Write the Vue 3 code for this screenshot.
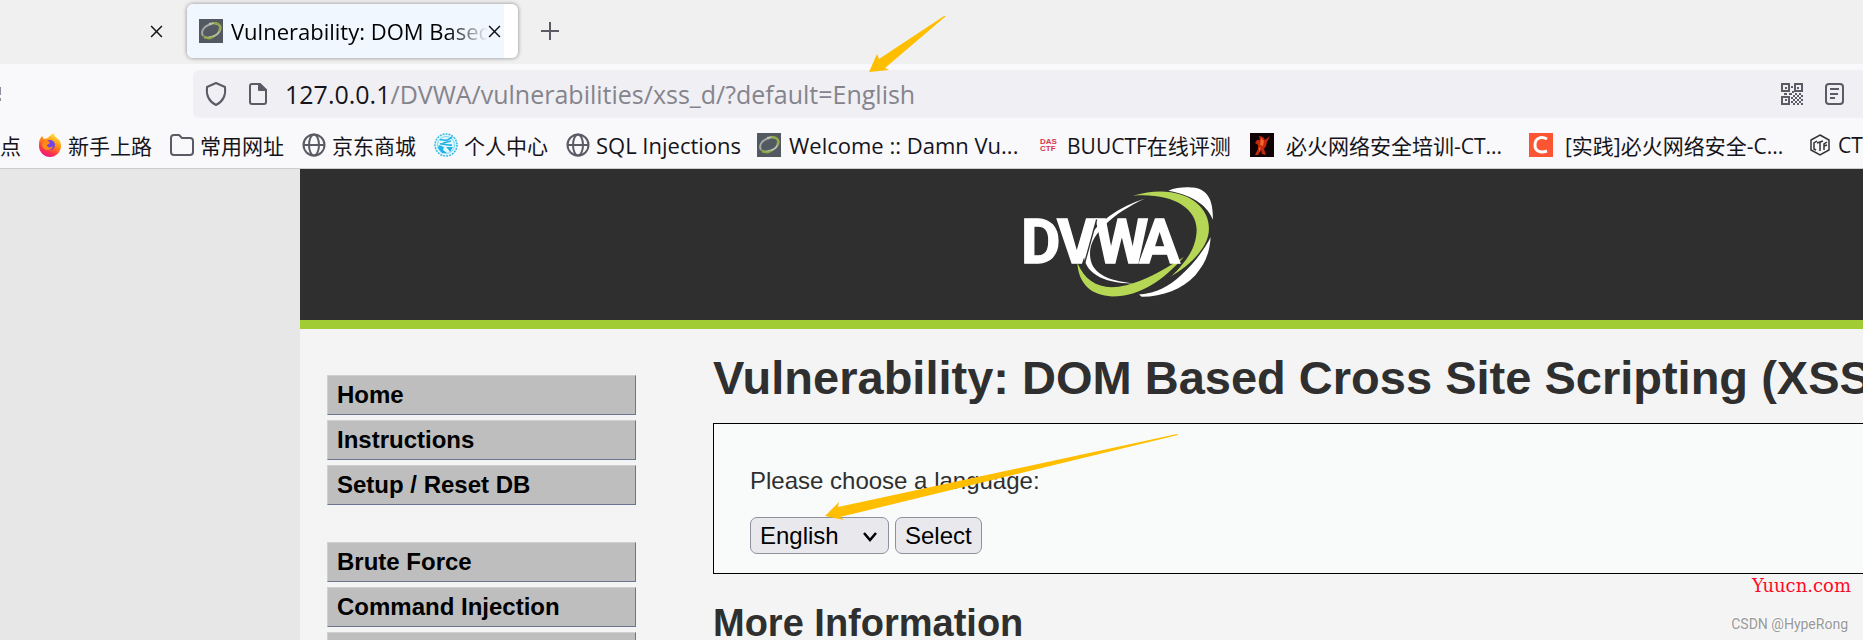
<script setup>
import { ref } from 'vue'

const language = ref('English')
const languages = ['English', 'French', 'Spanish', 'German']
const menu = [
  ['Home', 'Instructions', 'Setup / Reset DB'],
  ['Brute Force', 'Command Injection', 'CSRF'],
]
const bookmarks = [
  { icon: 'fox', label: '新手上路' },
  { icon: 'folder', label: '常用网址' },
  { icon: 'globe', label: '京东商城' },
  { icon: 'badge', label: '个人中心' },
  { icon: 'globe', label: 'SQL Injections', latin: true },
  { icon: 'dvwa', label: 'Welcome :: Damn Vu...', latin: true },
  { icon: 'das', label: 'BUUCTF在线评测' },
  { icon: 'fire', label: '必火网络安全培训-CT...' },
  { icon: 'c', label: '[实践]必火网络安全-C...' },
  { icon: 'hex', label: 'CT' },
]
</script>

<template>
  <div class="screen">
    <header class="browser">
      <div class="tabs">
        <button class="close" aria-label="Close previous tab">
          <svg width="13" height="13" viewBox="0 0 12 12"><path d="M1 1l10 10M11 1L1 11" /></svg>
        </button>
        <div class="tab">
          <div class="tab-fill">
            <svg class="favicon" width="24" height="24" viewBox="0 0 24 24">
              <rect width="24" height="24" fill="#535960" />
              <path d="M4 17C1 12 6 6 13 5" fill="none" stroke="#a5aaa5" stroke-width="2" />
              <path d="M10 5c8-2 13 1 11 6-2 6-11 9-16 7" fill="none" stroke="#b8c2a4" stroke-width="2" />
              <path d="M15 4c6 0 7 4 5 8M5 17c2 3 6 3 9 1" fill="none" stroke="#8fa83f" stroke-width="2" />
            </svg>
            <span class="tab-title">Vulnerability: DOM Based</span>
            <button class="close" aria-label="Close tab">
              <svg width="13" height="13" viewBox="0 0 12 12"><path d="M1 1l10 10M11 1L1 11" /></svg>
            </button>
          </div>
        </div>
        <button class="new-tab" aria-label="New tab">
          <svg width="18" height="18" viewBox="0 0 18 18"><path d="M9 0v18M0 9h18" /></svg>
        </button>
      </div>

      <div class="toolbar">
        <svg class="edge-icon" width="2" height="14" viewBox="0 0 2 14"><path d="M0 0h1v8H0zM0 11h1v3H0z" /></svg>
        <div class="address">
          <svg class="line-icon shield" width="24" height="26" viewBox="0 0 24 26"><path d="M12 2l9 4c1 8-1 14-9 18C4 20 2 14 3 6z" /></svg>
          <svg class="line-icon" width="20" height="24" viewBox="0 0 20 24"><path d="M4 2h8l6 6v12a2 2 0 0 1-2 2H4a2 2 0 0 1-2-2V4a2 2 0 0 1 2-2z" /><path d="M11 2v6h7z" fill="#5b5b66" /></svg>
          <span class="url"><b>127.0.0.1</b>/DVWA/vulnerabilities/xss_d/?default=English</span>
          <svg class="qr" width="22" height="22" viewBox="0 0 22 22" fill="#5b5b66">
            <path fill-rule="evenodd" d="M0 0h9v9H0zM2 2v5h5V2zM13 0h9v9h-9zM15 2v5h5V2zM0 13h9v9H0zM2 15v5h5v-5z" />
            <path d="M4 4h2v2H4zM16 4h2v2h-2zM4 16h2v2H4zM10 3h2v2h-2zM3 10h3v2H3zM8 10h3v2H8zM11 8h2v2h-2zM14 10h2v2h-2zM18 10h2v2h-2zM12 12h2v2h-2zM16 12h2v2h-2zM20 12h2v2h-2zM10 14h2v2h-2zM14 14h2v2h-2zM18 14h2v2h-2zM12 16h2v2h-2zM16 16h2v2h-2zM20 16h2v2h-2zM10 18h2v2h-2zM14 18h2v2h-2zM18 18h2v2h-2zM12 20h2v2h-2zM16 20h2v2h-2zM20 20h2v2h-2z" />
          </svg>
          <svg class="line-icon" width="20" height="22" viewBox="0 0 20 22"><rect x="1" y="1" width="17" height="20" rx="3" /><path d="M5 6h9M5 11h8M5 15h5" /></svg>
        </div>
      </div>

      <nav class="bookmarks" aria-label="Bookmarks">
        <a href="#" class="cut">点</a>
        <a v-for="b in bookmarks" :key="b.label" href="#" :class="[b.icon, { latin: b.latin }]">
          <svg width="24" height="24" viewBox="0 0 24 24">
            <template v-if="b.icon === 'fox'">
              <defs>
                <linearGradient id="fox" x1="0.8" y1="0" x2="0.3" y2="1">
                  <stop offset="0" stop-color="#fff44f" /><stop offset="0.4" stop-color="#ff980e" /><stop offset="0.75" stop-color="#ff3647" /><stop offset="1" stop-color="#e31587" />
                </linearGradient>
              </defs>
              <path d="M2 6l2-3 2 3 4-1c1-2 4-4 6-5 0 3 2 4 4 6 2 1 3 4 3 7 0 6-5 11-11 11S1 19 1 13c0-3 0-5 1-7z" fill="url(#fox)" />
              <circle cx="12" cy="12" r="5" fill="#7542e5" />
              <path d="M6 8c3-1 5 0 6 2l-3 2c0 3 4 3 6 1-1 5-10 6-11-1z" fill="#ff8a16" />
            </template>
            <path v-else-if="b.icon === 'folder'" class="stroke" d="M4 2h5l3 3h8a3 3 0 0 1 3 3v11a3 3 0 0 1-3 3H4a3 3 0 0 1-3-3V5a3 3 0 0 1 3-3z" />
            <g v-else-if="b.icon === 'globe'" class="stroke"><circle cx="12" cy="12" r="10.5" /><ellipse cx="12" cy="12" rx="5" ry="10.5" /><path d="M2 12h20" /></g>
            <g v-else-if="b.icon === 'badge'">
              <circle cx="12" cy="12" r="11" fill="#e4f7fd" stroke="#35b9e7" stroke-width="1.5" stroke-dasharray="2 1" />
              <circle cx="12" cy="12" r="8.5" fill="none" stroke="#7ed3f0" />
              <path d="M6 7c3-1 6 2 9-1l3-2M9 10l8-2M6 11c4-1 7 2 12 1" fill="none" stroke="#1fb3e6" stroke-width="1.6" />
              <path d="M5 12l5 2-1 3 4 3-5 0-4-5zM12 14l7 0-3 5-2-3z" fill="#1fb3e6" />
            </g>
            <g v-else-if="b.icon === 'dvwa'">
              <rect width="24" height="24" fill="#535960" />
              <path d="M4 17C1 12 6 6 13 5" fill="none" stroke="#a5aaa5" stroke-width="2" />
              <path d="M10 5c8-2 13 1 11 6-2 6-11 9-16 7" fill="none" stroke="#b8c2a4" stroke-width="2" />
              <path d="M15 4c6 0 7 4 5 8M5 17c2 3 6 3 9 1" fill="none" stroke="#8fa83f" stroke-width="2" />
            </g>
            <g v-else-if="b.icon === 'das'" class="das-text"><text x="2" y="11">DAS</text><text x="2" y="18">CTF</text></g>
            <g v-else-if="b.icon === 'fire'">
              <rect width="24" height="24" fill="#100204" />
              <path d="M9 3l4 1 2 3 5-4-3 6-1 4-2 3 2 6-4-1-1-4-3 5-3 0 3-6 0-4-3-2 2-3 3 0z" fill="#c3280f" />
              <path d="M11 5l3 3-1 5-3-1zM9 15l2-1-2 5zM14 14l1 5" fill="#f1672b" />
            </g>
            <g v-else-if="b.icon === 'c'"><rect width="24" height="24" fill="#fc5531" /><path d="M18 6c-6-3-12-1-12 6 0 7 6 8 12 6" fill="none" stroke="#fff" stroke-width="3" /></g>
            <g v-else class="hexagon"><path d="M12 2l9 5v10l-9 5-9-5V7z" /><path d="M9 8l-3 2v6l2 1M9 10l6-2M12 9v9M19 9l-3 2v6M16 13l3-1" /></g>
          </svg>
          <span>{{ b.label }}</span>
        </a>
      </nav>
    </header>

    <main class="site">
      <div class="masthead">
        <svg width="190" height="110" viewBox="129 65 570 329" role="img" aria-label="DVWA">
          <path d="M565 76C590 64 625 64 645 67c40 8 54 38 54 96-15-36-50-72-134-87z" fill="#fff" />
          <path d="M692 215c-4 50-16 78-46 114-40 42-96 64-161 65l-8-7c54-5 90-25 126-58 40-36 66-72 89-114z" fill="#fff" />
          <path d="M458 91c80-24 150-13 190 20 30 25 42 56 38 90-6 50-58 100-116 133 50-45 78-85 80-140 0-70-80-113-192-103z" fill="#b5d755" />
          <path d="M615 275c-10 25-24 40-42 57" fill="none" stroke="#2f2f2f" stroke-width="3" />
          <path d="M292 292c45 105 150 95 320-18-60 68-128 119-216 119-60-3-100-35-104-101z" fill="#b5d755" />
          <path d="M495 99c-80 25-140 70-175 125-30 75 20 130 140 130-80-10-130-30-130-90 0-60 70-120 165-165z" fill="#fff" />
          <text class="logo-text" x="123 231 346 478" y="291">DVWA</text>
          <path d="M350 162l-36 130" stroke="#2f2f2f" stroke-width="4" />
        </svg>
      </div>
      <div class="columns">
        <nav class="menu" aria-label="Main menu">
          <ul v-for="(group, i) in menu" :key="i">
            <li v-for="item in group" :key="item"><a href="#">{{ item }}</a></li>
          </ul>
        </nav>
        <section class="content">
          <h1>Vulnerability: DOM Based Cross Site Scripting (XSS)</h1>
          <form class="panel" @submit.prevent>
            <label for="language">Please choose a language:</label>
            <div class="controls">
              <div class="dropdown">
                <select id="language" v-model="language">
                  <option v-for="l in languages" :key="l">{{ l }}</option>
                </select>
                <svg width="16" height="12" viewBox="0 0 16 12"><path d="M2 2l6 7 6-7" /></svg>
              </div>
              <button type="submit">Select</button>
            </div>
          </form>
          <h2>More Information</h2>
        </section>
      </div>
    </main>

    <svg class="arrows" width="1200" height="640" viewBox="0 0 1200 640" aria-hidden="true">
      <path d="M944 16h2L885 68l4 2-20 2 8-18 2 5z" />
      <path d="M1177 434l1 1L840 517l4 3-19-4 14-14-1 5z" />
    </svg>
    <div class="marks">
      <span class="site-mark">Yuucn.com</span>
      <span class="author-mark">CSDN @HypeRong</span>
    </div>
  </div>
</template>

<style>
body { margin: 0; }
</style>

<style scoped>
* { box-sizing: border-box; }
.screen {
  position: relative;
  height: 100vh;
  overflow: hidden;
  background: #e7e7e7;
  font-family: "Liberation Sans", "Noto Sans CJK SC", sans-serif;
}
button { font: inherit; }
.browser {
  background: #f9f9fb;
  border-bottom: 1px solid #cccccc;
  font-family: "Open Sans", "Noto Sans CJK SC", sans-serif;
  color: #15141a;
}
.tabs {
  display: flex;
  align-items: center;
  height: 64px;
  padding: 0 0 2px 150px;
  background: #f0f0f0;
}
.close, .new-tab {
  display: flex;
  flex: none;
  padding: 0;
  border: 0;
  background: none;
}
.close svg { stroke: #15141a; stroke-width: 1.4; }
.new-tab { margin-left: 23px; }
.new-tab svg { stroke: #5b5b66; stroke-width: 2; }
.tab {
  width: 331px;
  height: 54px;
  margin-left: 24px;
  padding-right: 14px;
  border-radius: 6px;
  background: #fff;
  box-shadow: 0 0 4px #888;
}
.tab-fill {
  display: flex;
  align-items: center;
  height: 100%;
  padding-left: 12px;
  border-radius: 6px 0 0 6px;
  background: #f0f7ff;
}
.favicon { flex: none; }
.tab-title {
  width: 257px;
  margin-left: 8px;
  overflow: hidden;
  white-space: nowrap;
  font-size: 22px;
  color: #000;
  mask-image: linear-gradient(to right, #000 84%, transparent);
}
.toolbar { display: flex; align-items: center; padding: 6px 0; }
.edge-icon { flex: none; margin-right: 191px; fill: #8f8f9d; }
.address {
  display: flex;
  flex: 1;
  align-items: center;
  height: 48px;
  padding: 0 18px 0 11px;
  border-radius: 6px 0 0 6px;
  background: #f0eff4;
}
.line-icon { flex: none; fill: none; stroke: #5b5b66; stroke-width: 2; stroke-linejoin: round; }
.shield { margin-right: 20px; }
.url { flex: 1; margin-left: 17px; font-size: 25px; color: #85848c; white-space: nowrap; }
.url b { font-weight: 400; color: #15141a; }
.qr { margin-right: 22px; }
.bookmarks {
  display: flex;
  align-items: center;
  height: 44px;
  padding-bottom: 2px;
  white-space: nowrap;
  font-size: 21px;
}
.bookmarks a {
  display: flex;
  flex: none;
  align-items: center;
  gap: 6px;
  width: 132px;
  height: 30px;
  color: inherit;
  text-decoration: none;
}
.bookmarks svg { flex: none; }
.bookmarks .cut { width: 38px; }
.bookmarks .latin { width: 191px; font-size: 22px; }
.bookmarks .dvwa { gap: 8px; width: 281px; }
.bookmarks .das { width: 212px; gap: 5px; }
.bookmarks .fire { gap: 12px; width: 279px; }
.bookmarks .c { gap: 12px; width: 279px; }
.stroke { fill: none; stroke: #5b5b66; stroke-width: 2; }
.das-text { font: 700 8px "Liberation Sans", sans-serif; fill: #d8344c; }
.hexagon { fill: none; stroke: #333; stroke-width: 1.5; }
.site {
  margin: 0 -73px 0 300px;
  min-height: 471px;
  background: #f4f4f4;
}
.masthead {
  display: flex;
  justify-content: center;
  height: 160px;
  padding-top: 18px;
  border-bottom: 9px solid #a1cc33;
  background: #2f2f2f;
}
.logo-text { font: 700 182px Roboto, sans-serif; fill: #fff; stroke: #fff; stroke-width: 4; }
.columns { display: flex; }
.menu { width: 336px; padding: 46px 0 0 27px; }
.menu ul { display: grid; gap: 5px; margin: 0 0 37px; padding: 0; list-style: none; }
.menu a {
  display: block;
  height: 40px;
  padding-left: 9px;
  border: 1px solid;
  border-color: #d0d0d0 #6b7590 #6b7590 #d0d0d0;
  background: #bebebe;
  color: #000;
  font-size: 24px;
  font-weight: 700;
  line-height: 38px;
  text-decoration: none;
}
.content { flex: 1; padding: 21px 0 0 77px; color: #2f2f2f; }
h1 { margin: 0; font-size: 47px; line-height: 56px; white-space: nowrap; }
.panel {
  height: 151px;
  margin-top: 17px;
  padding: 43px 36px 0;
  border: 1px solid #000;
  background: #f9fbfa;
  font-size: 24px;
}
.panel label { display: block; line-height: 28px; }
.controls { display: flex; gap: 6px; margin-top: 22px; }
.dropdown { position: relative; }
.dropdown svg {
  position: absolute;
  top: 14px;
  right: 11px;
  fill: none;
  stroke: #000;
  stroke-width: 2.5;
  pointer-events: none;
}
.controls select, .controls button {
  height: 37px;
  padding: 0 9px;
  border: 1px solid #8f8f9d;
  border-radius: 7px;
  background: #e9e9ed;
  color: #000;
  font: inherit;
}
.controls select { width: 139px; appearance: none; }
h2 { margin: 27px 0 0; font-size: 38px; line-height: 44px; }
.arrows { position: absolute; top: 0; left: 0; fill: #ffbe00; pointer-events: none; }
.marks {
  position: absolute;
  right: 12px;
  bottom: 7px;
  display: grid;
  justify-items: end;
  gap: 18px;
}
.site-mark { font: 18px/22px "DejaVu Serif", serif; color: #ff0a24; }
.author-mark { padding-right: 3px; font: 14px/18px Roboto, sans-serif; color: #999; text-shadow: -1px -1px #fff; }
</style>
